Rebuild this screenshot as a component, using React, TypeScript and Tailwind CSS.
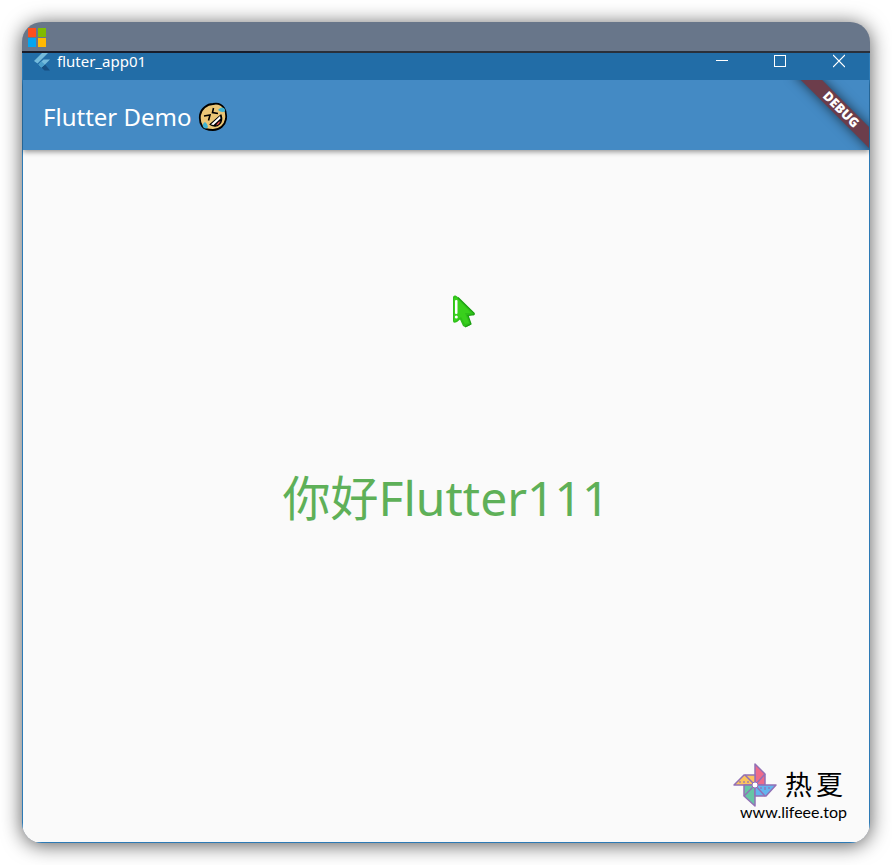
import React from "react";

function WindowsLogo() {
  return (
    <svg width="18" height="20" viewBox="0 0 18 20" aria-hidden="true">
      <rect x="0" y="0" width="8" height="9" fill="#fc4f1e" />
      <rect x="10" y="0" width="8" height="9" fill="#80bb03" />
      <rect x="0" y="10" width="8" height="9" fill="#03a5f0" />
      <rect x="10" y="10" width="8" height="9" fill="#ffb903" />
    </svg>
  );
}

function FlutterLogo() {
  return (
    <svg width="17" height="18" viewBox="0 0 17 18" aria-hidden="true">
      <path d="M8 0H14L3.500 10.500L0 8Z" fill="#74bbdc" />
      <path d="M9.500 6.500H16L11 11.500L7.500 14.500L4.500 11.500Z" fill="#74bbdc" />
      <path d="M7.500 14.500L11 11.500L16 17.500H10.500Z" fill="#174f82" />
      <path d="M4.500 11.500L7.500 8.500L11 11.500L7.500 14.500Z" fill="#4b9fcb" />
    </svg>
  );
}

function LaughingFace() {
  return (
    <svg width="30" height="30" viewBox="0 0 30 30" aria-hidden="true">
      <path d="M15 2C20 1 24 3 26 6C28 9 28.500 13 28 17C27 23 22 28 15 28C10 28 6 27 4 24C2 21 1.500 17 2 13C3 7 9 2 15 2Z" fill="#ebc677" stroke="#000" strokeWidth="1.800" />
      <path d="M21 7Q23 4.500 26 6Q29 10 24.500 10Q22 10 20 8Z" fill="#3fb2d1" />
      <path d="M7 20Q4 22 5 25Q8 28 10 25Q10 22 7 20Z" fill="#3fb2d1" />
      <path d="M15.500 6L14.500 10.500L20 11.500" fill="none" stroke="#000" strokeWidth="1.600" />
      <path d="M6 14L12 13L10.500 18.500" fill="none" stroke="#000" strokeWidth="1.600" />
      <path d="M23 13Q25 19 21.500 22Q18 26 12 22.500Z" fill="#000" stroke="#000" strokeWidth="1.200" strokeLinejoin="round" />
      <path d="M22 14L22.500 16.500L15.500 23L13 22.500Z" fill="#fff" />
      <path d="M18.500 22.500Q20 19.500 22.500 19Q21.500 22.500 18.500 23.500Z" fill="#e34b4b" />
    </svg>
  );
}

function Pointer() {
  return (
    <svg width="22" height="33" viewBox="0 0 22 33" aria-hidden="true">
      <path d="M0 2Q0.500 0 2.500 0.500Q4 1 6 3.500L21 18Q22 20 19 20L15 20.500L18 29Q17 31 12 32L10 31L7 24.500L4 27Q0 29 0 26Z" fill="#2fbf1a" />
      <path d="M1 3L3 2L18 18H12L16 28L12 29L8 22L3 26L1 26Z" fill="#39d01d" />
      <path d="M5 2.500L21 18Q22 20 19 20L15 20.500L18 29L12 32" fill="none" stroke="#1b9e11" strokeWidth="1.200" />
      <rect x="2" y="5" width="2.500" height="14" rx="1" fill="#fff" />
      <circle cx="3.300" cy="22" r="1.500" fill="#fff" />
    </svg>
  );
}

function Pinwheel() {
  return (
    <svg width="44" height="46" viewBox="0 0 44 46" aria-hidden="true">
      <g stroke="#9270b5" strokeWidth="1.500" strokeLinejoin="round">
        <path d="M22 23V2L32 12V23Z" fill="#ee6b8a" />
        <path d="M22 23L32 12" />
        <path d="M22 23H1L11 13H22Z" fill="#fcc45e" />
        <path d="M22 23L12 13" />
        <path d="M22 23V44L11 34V23Z" fill="#66c6a5" />
        <path d="M22 23L11 34" />
        <path d="M22 23H43L33 34H22Z" fill="#63b5ee" />
        <path d="M22 23L32 34" />
      </g>
      <path d="M7 19V21M11 19V21M15 19V21M28 25V27M32 25V28M36 25V27" stroke="#9270b5" strokeWidth="1.200" />
      <circle cx="22" cy="23" r="3" fill="#fff" stroke="#9270b5" />
    </svg>
  );
}

function WindowButtons() {
  return (
    <div className="flex h-full">
      <button type="button" aria-label="Minimize" className="flex h-full w-[58px] justify-center">
        <svg width="12" height="16" viewBox="0 0 12 16"><path d="M0 7.500H12" stroke="#fff" /></svg>
      </button>
      <button type="button" aria-label="Maximize" className="flex h-full w-[58px] justify-center">
        <svg width="12" height="16" viewBox="0 0 12 16"><rect x="0.500" y="2.500" width="11" height="11" fill="none" stroke="#fff" /></svg>
      </button>
      <button type="button" aria-label="Close" className="flex h-full w-[60px] justify-center">
        <svg width="12" height="16" viewBox="0 0 12 16"><path d="M0 2L12 14M12 2L0 14" stroke="#fff" strokeWidth="1.200" /></svg>
      </button>
    </div>
  );
}

export default function App() {
  return (
    <div className="flex min-h-screen bg-white p-[22px] font-['Noto_Sans','Noto_Sans_CJK_SC',sans-serif]">
      <div className="flex flex-1 flex-col overflow-hidden rounded-[20px] bg-[#68768a] shadow-[0_2px_20px_rgba(0,0,0,0.65)]">
        <div className="h-[29px] shrink-0 pt-[6px] pl-[6px]">
          <WindowsLogo />
        </div>
        <div className="flex h-[2px] shrink-0 bg-[#2b303a]">
          <div className="w-[238px] bg-[#191d2b]" />
        </div>
        <div className="flex flex-1 flex-col border-x border-b border-[#2d7ab5] bg-[#fafafa]">
          <div className="relative z-20 flex h-[27px] shrink-0 items-start bg-[#226da7] pl-[11px]">
            <FlutterLogo />
            <span className="ml-[6px] flex-1 text-[15px] leading-4 text-white">fluter_app01</span>
            <WindowButtons />
          </div>
          <header className="relative z-10 flex h-[70px] shrink-0 items-center bg-[#448ac4] pt-1 pl-5 shadow-[0_2px_5px_rgba(0,0,0,0.4)]">
            <h1 className="text-[24px] leading-8 text-white">Flutter Demo</h1>
            <span className="ml-[6px]">
              <LaughingFace />
            </span>
            <div className="absolute top-0 right-0 h-[70px] w-[90px] overflow-hidden">
              <div className="absolute top-[22px] left-[2px] h-[15px] w-[120px] rotate-45 bg-[#6c3d4b] text-center font-['Noto_Sans',sans-serif] text-[13px] leading-[15px] font-black text-white shadow-[0_0_12px_rgba(0,0,0,0.6)]">
                DEBUG
              </div>
            </div>
          </header>
          <main className="relative flex flex-1 flex-col items-center justify-center pt-1">
            <p className="text-[48px] leading-[68px] text-[#5eb058]">你好Flutter111</p>
            <div className="absolute top-[145px] left-[430px]">
              <Pointer />
            </div>
            <div className="absolute right-[22px] bottom-[22px] flex flex-col items-end text-black">
              <div className="flex items-center gap-2 pr-1">
                <Pinwheel />
                <span className="flex gap-1 text-[27px] leading-8">
                  <span>热</span>
                  <span>夏</span>
                </span>
              </div>
              <a href="#top" className="-mt-1 font-['Lato',sans-serif] text-[16px] leading-4">www.lifeee.top</a>
            </div>
          </main>
        </div>
      </div>
    </div>
  );
}
